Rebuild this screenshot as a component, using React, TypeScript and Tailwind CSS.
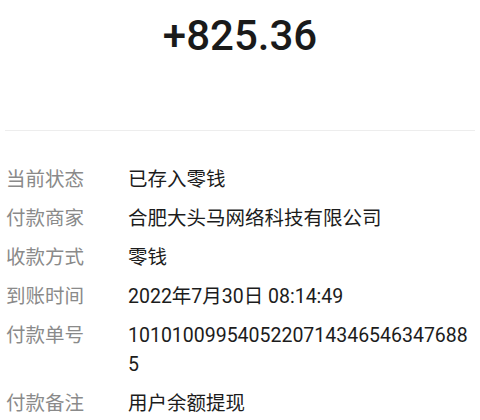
const rows: Array<{ label: string; value: string }> = [
  { label: "当前状态", value: "已存入零钱" },
  { label: "付款商家", value: "合肥大头马网络科技有限公司" },
  { label: "收款方式", value: "零钱" },
  { label: "到账时间", value: "2022年7月30日 08:14:49" },
  { label: "付款单号", value: "10101009954052207143465463476885" },
  { label: "付款备注", value: "用户余额提现" },
];

export default function App() {
  return (
    <div
      className="w-[480px] h-[420px] bg-white overflow-hidden"
      style={{ fontFamily: "Roboto, 'Noto Sans CJK SC', sans-serif" }}
    >
      {/* Amount */}
      <div className="h-[130px] flex justify-center pt-[9px]">
        <p className="text-[42px] leading-[54px] font-medium text-[#1a1a1a]">+825.36</p>
      </div>

      <div className="mx-[5px] h-px bg-[#ededed]" />

      {/* Details */}
      <div className="pl-[6px] pr-[6px] pt-[34px] flex flex-col gap-[10px]">
        {rows.map((row) => (
          <div key={row.label} className="flex items-start text-[19.5px] leading-[29px]">
            <span className="w-[122px] shrink-0 text-[#8a8a8a]">{row.label}</span>
            <span className="flex-1 min-w-0 break-all text-[#1c1c1c]">{row.value}</span>
          </div>
        ))}
      </div>
    </div>
  );
}
